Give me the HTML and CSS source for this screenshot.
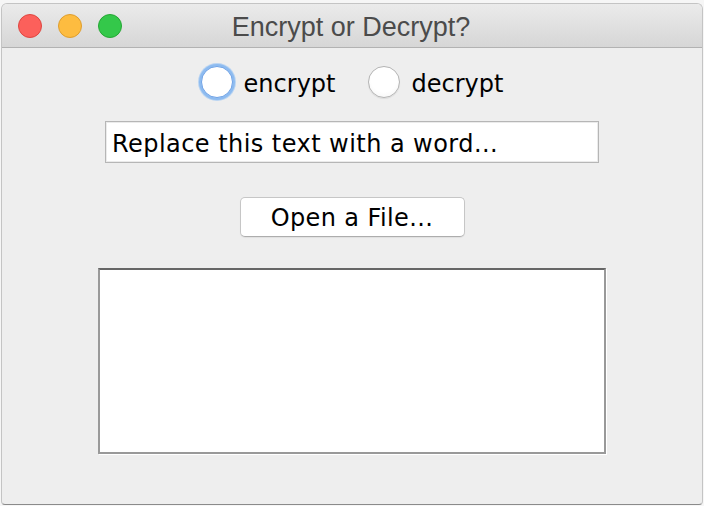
FILE: index.html
```html
<!DOCTYPE html>
<html>
<head>
<meta charset="utf-8">
<title>Encrypt or Decrypt?</title>
<link rel="stylesheet" href="styles.css">
</head>
<body>
<div class="window">
  <div class="titlebar">
    <div class="lights">
      <span class="light red"></span>
      <span class="light yellow"></span>
      <span class="light green"></span>
    </div>
    <div class="title">Encrypt or Decrypt?</div>
    <div></div>
  </div>
  <div class="content">
    <div class="radios">
      <label class="radio"><span class="dot focused"></span><span class="rlabel">encrypt</span></label>
      <label class="radio"><span class="dot"></span><span class="rlabel">decrypt</span></label>
    </div>
    <div class="field">Replace this text with a word...</div>
    <div class="button">Open a File...</div>
    <div class="textarea"></div>
  </div>
</div>
</body>
</html>
```
FILE: styles.css
```css
html, body {
  margin: 0;
  padding: 0;
}
body {
  background: #f6f6f6;
  width: 704px;
  height: 506px;
  overflow: hidden;
}
.window {
  margin: 3px 1px 0 1px;
  width: 700px;
  height: 500px;
  border: 1px solid #c4c4c4;
  border-bottom-color: #8a8a8a;
  border-radius: 6px 6px 4px 4px;
  background: #eeeeee;
  overflow: hidden;
  display: flex;
  flex-direction: column;
}
.titlebar {
  height: 43px;
  border-bottom: 1px solid #b2b2b2;
  background: linear-gradient(#ebebeb, #d6d6d6);
  display: grid;
  grid-template-columns: 1fr auto 1fr;
  align-items: center;
}
.lights {
  display: flex;
  gap: 16px;
  padding-left: 16px;
  padding-top: 1px;
}
.light {
  width: 22px;
  height: 22px;
  border-radius: 50%;
  border: 1px solid;
}
.red { background: #fc605b; border-color: #de4640; }
.yellow { background: #fdbc40; border-color: #de9e2e; }
.green { background: #34c84a; border-color: #25a734; }
.title {
  font-family: "Liberation Sans", Arial, sans-serif;
  font-size: 27px;
  color: #4b4b4b;
  padding-top: 3px;
  padding-right: 2px;
}
.content {
  display: flex;
  flex-direction: column;
  align-items: center;
  font-family: "DejaVu Sans", Verdana, sans-serif;
  font-size: 24px;
  color: #000;
}
.radios {
  margin-top: 16px;
  height: 36px;
  display: flex;
  align-items: center;
  gap: 33px;
}
.radio {
  display: flex;
  align-items: center;
  gap: 11px;
}
.dot {
  width: 30px;
  height: 30px;
  border-radius: 50%;
  border: 1px solid #b4b4b4;
  background: radial-gradient(circle at 50% 40%, #ffffff 55%, #f2f2f2 100%);
  box-shadow: 0 1px 1px rgba(0,0,0,0.08);
}
.dot.focused {
  border-color: #6fa2e6;
  background: #fff;
  box-shadow: 0 0 0 2px #8dbbf0, 0 0 0 3px rgba(150,195,245,0.6);
}
.rlabel {
  line-height: 36px;
  padding-top: 4px;
}
.field {
  margin-top: 21px;
  width: 492px;
  height: 40px;
  box-sizing: content-box;
  border: 1px solid #b6b6b6;
  background: #fff;
  box-shadow: inset 0 0 0 1px #ebebeb;
  text-indent: 6px;
  line-height: 44px;
  letter-spacing: 0.45px;
  overflow: hidden;
}
.button {
  margin-top: 34px;
  width: 223px;
  height: 38px;
  border: 1px solid #c6c6c6;
  border-bottom-color: #adadad;
  border-radius: 5px;
  background: #fff;
  box-shadow: 0 1px 1px rgba(0,0,0,0.06);
  text-align: center;
  line-height: 41px;
  letter-spacing: 0.4px;
  overflow: hidden;
}
.textarea {
  margin-top: 31px;
  width: 504px;
  height: 182px;
  background: #fff;
  border: 2px solid #999;
  border-top-color: #666;
  box-shadow: 1px 1px 0 #fff;
}
```
